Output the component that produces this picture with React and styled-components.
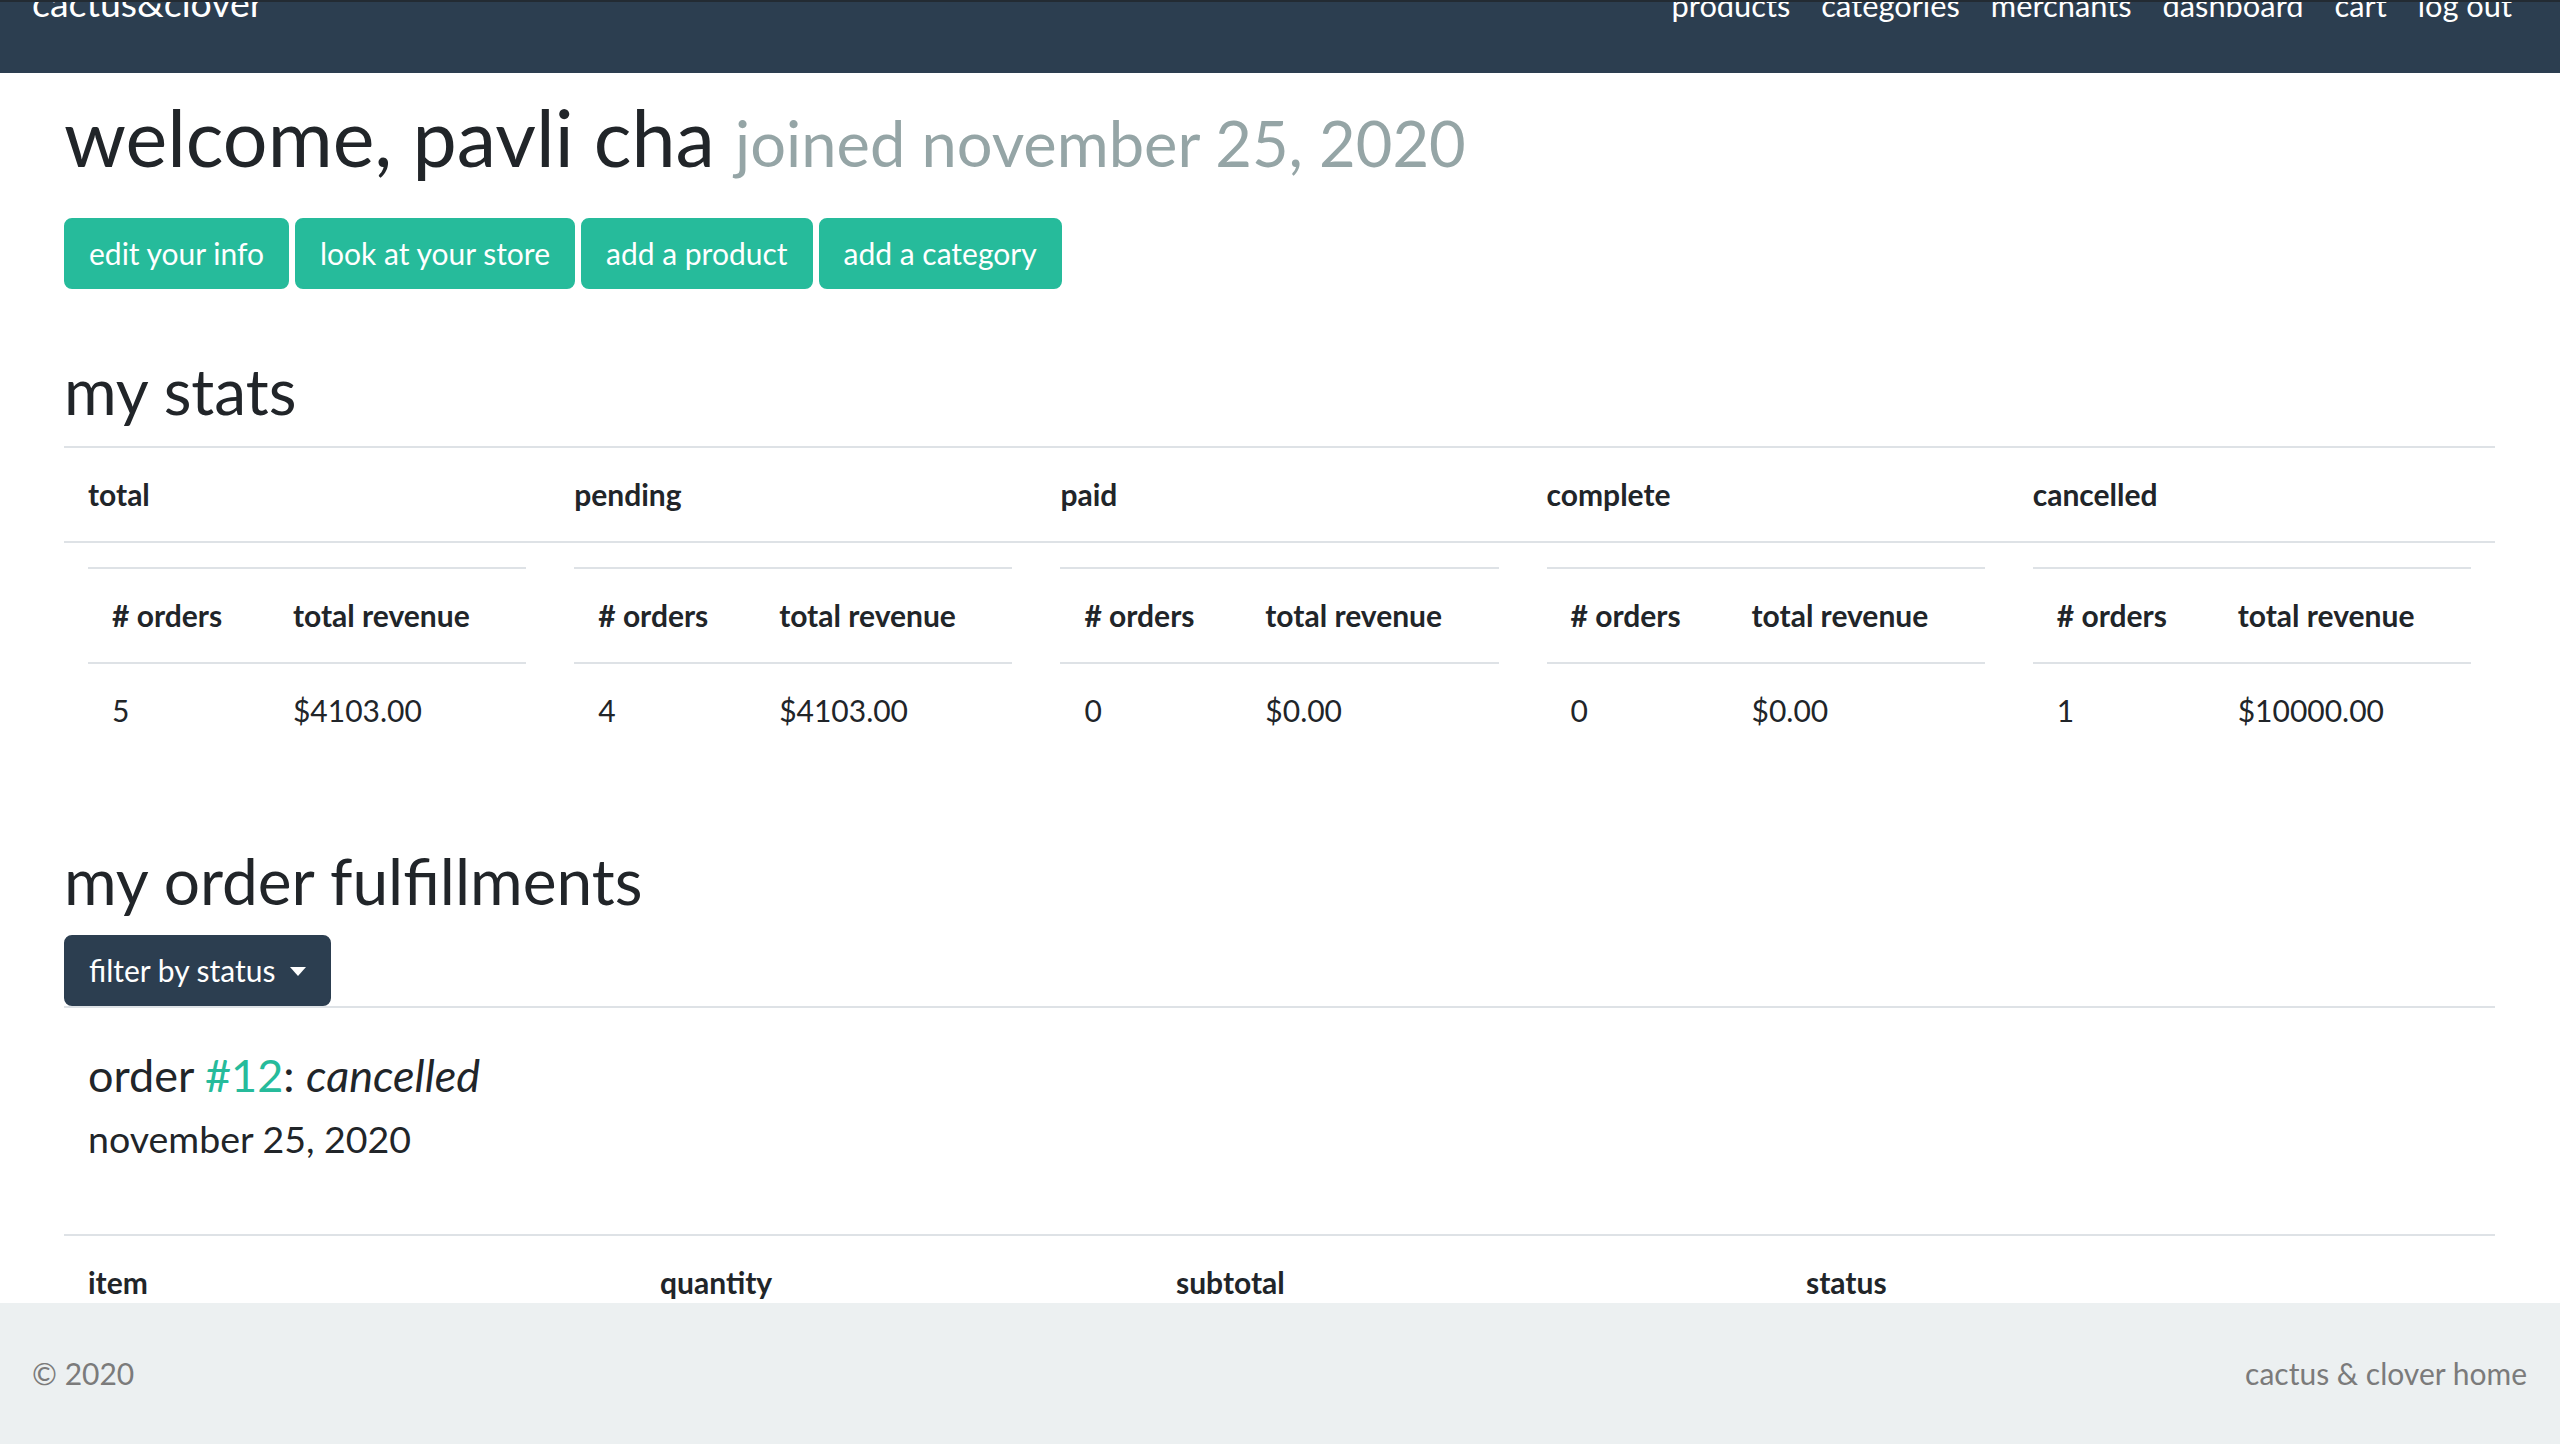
import React from "react";
import styled, { createGlobalStyle } from "styled-components";

const GlobalStyle = createGlobalStyle`
  html, body {
    margin: 0;
    padding: 0;
    background: #ffffff;
  }
  body {
    font-family: Lato, "Noto Sans", sans-serif;
    font-size: 30px;
    line-height: 1.5;
    color: #212529;
  }
  * {
    box-sizing: border-box;
  }
`;

const Navbar = styled.nav`
  height: 73px;
  overflow: hidden;
  background-color: #2c3e50;
  border-top: 2px solid #232b33;
  padding: 0 32px;
`;

const NavRow = styled.div`
  display: flex;
  align-items: baseline;
  justify-content: space-between;
  margin-top: -27px;
`;

const Brand = styled.a`
  color: #ffffff;
  font-size: 37.5px;
  line-height: 1.5;
  text-decoration: none;
`;

const NavLinks = styled.ul`
  display: flex;
  align-items: baseline;
  list-style: none;
  margin: 0;
  padding: 0;
`;

const NavLink = styled.li`
  color: #ffffff;
  font-size: 30.8px;
  line-height: 1.5;
  padding: 0 15.5px;
  &:last-child {
    padding-right: 16px;
  }
`;

const Main = styled.main`
  padding: 0 65px 160px 64px;
`;

const Title = styled.h1`
  font-size: 79px;
  font-weight: 400;
  line-height: 1.2;
  margin: 17px 0 33px;
`;

const Joined = styled.small`
  font-size: 80%;
  color: #95a5a6;
`;

const ButtonRow = styled.div`
  display: flex;
  gap: 6px;
  margin-bottom: 64px;
`;

const Button = styled.button`
  font-family: inherit;
  font-size: 30px;
  line-height: 1.5;
  color: #ffffff;
  background-color: ${(p) => (p.$variant === "primary" ? "#2c3e50" : "#26bb9b")};
  border: 2px solid ${(p) => (p.$variant === "primary" ? "#2c3e50" : "#26bb9b")};
  border-radius: 8px;
  padding: 11px 23px;
  display: inline-flex;
  align-items: center;
  cursor: pointer;
`;

const Caret = styled.span`
  display: inline-block;
  margin-left: 14px;
  width: 0;
  height: 0;
  border-top: 9px solid #ffffff;
  border-left: 8px solid transparent;
  border-right: 8px solid transparent;
  transform: translateY(1px);
`;

const SectionTitle = styled.h2`
  font-size: 64px;
  font-weight: 400;
  line-height: 1.2;
  margin: 0 0 ${(p) => p.$gap || 16}px;
`;

const Table = styled.table`
  width: 100%;
  border-collapse: collapse;
  table-layout: ${(p) => (p.$fixed ? "fixed" : "auto")};
  margin-bottom: ${(p) => p.$space || 0}px;
`;

const Th = styled.th`
  text-align: left;
  font-weight: 700;
  padding: 24px;
  vertical-align: top;
  border-top: 2px solid #dee2e6;
  border-bottom: 2px solid #dee2e6;
`;

const Td = styled.td`
  padding: 24px;
  vertical-align: top;
`;

const OrderList = styled.section`
  border-top: 2px solid #dee2e6;
  padding-top: 40px;
`;

const OrderHeading = styled.h4`
  font-size: 45px;
  font-weight: 400;
  line-height: 1.2;
  margin: 0 0 14px;
  padding-left: 24px;
`;

const OrderLink = styled.a`
  color: #26bb9b;
  text-decoration: none;
`;

const OrderDate = styled.h5`
  font-size: 37.5px;
  font-weight: 400;
  line-height: 1.2;
  margin: 0 0 73px;
  padding-left: 24px;
`;

const Footer = styled.footer`
  position: fixed;
  left: 0;
  right: 0;
  bottom: 0;
  height: 141px;
  background-color: #ecf0f1;
  color: #7b7b7b;
  display: flex;
  align-items: center;
  justify-content: space-between;
  padding: 0 33px 0 32px;
`;

const links = ["products", "categories", "merchants", "dashboard", "cart", "log out"];

const stats = [
  { label: "total", orders: 5, revenue: "$4103.00" },
  { label: "pending", orders: 4, revenue: "$4103.00" },
  { label: "paid", orders: 0, revenue: "$0.00" },
  { label: "complete", orders: 0, revenue: "$0.00" },
  { label: "cancelled", orders: 1, revenue: "$10000.00" },
];

const itemCols = [
  { label: "item", width: 572 },
  { label: "quantity", width: 516 },
  { label: "subtotal", width: 630 },
  { label: "status", width: 713 },
];

const StatCell = ({ orders, revenue }) => (
  <Table $space={32}>
    <thead>
      <tr>
        <Th># orders</Th>
        <Th>total revenue</Th>
      </tr>
    </thead>
    <tbody>
      <tr>
        <Td>{orders}</Td>
        <Td>{revenue}</Td>
      </tr>
    </tbody>
  </Table>
);

const App = () => {
  return (
    <>
      <GlobalStyle />
      <Navbar>
        <NavRow>
          <Brand>cactus&amp;clover</Brand>
          <NavLinks>
            {links.map((l) => (
              <NavLink key={l}>{l}</NavLink>
            ))}
          </NavLinks>
        </NavRow>
      </Navbar>
      <Main>
        <Title>
          welcome, pavli cha <Joined>joined november 25, 2020</Joined>
        </Title>
        <ButtonRow>
          <Button>edit your info</Button>
          <Button>look at your store</Button>
          <Button>add a product</Button>
          <Button>add a category</Button>
        </ButtonRow>

        <SectionTitle>my stats</SectionTitle>
        <Table $fixed $space={30}>
          <thead>
            <tr>
              {stats.map((s) => (
                <Th key={s.label}>{s.label}</Th>
              ))}
            </tr>
          </thead>
          <tbody>
            <tr>
              {stats.map((s) => (
                <Td key={s.label}>
                  <StatCell orders={s.orders} revenue={s.revenue} />
                </Td>
              ))}
            </tr>
          </tbody>
        </Table>

        <SectionTitle $gap={16}>my order fulfillments</SectionTitle>
        <Button $variant="primary">
          filter by status
          <Caret />
        </Button>
        <OrderList>
          <OrderHeading>
            order <OrderLink>#12</OrderLink>: <em>cancelled</em>
          </OrderHeading>
          <OrderDate>november 25, 2020</OrderDate>
          <Table $fixed>
            <colgroup>
              {itemCols.map((c) => (
                <col key={c.label} style={{ width: c.width }} />
              ))}
            </colgroup>
            <thead>
              <tr>
                {itemCols.map((c) => (
                  <Th key={c.label}>{c.label}</Th>
                ))}
              </tr>
            </thead>
          </Table>
        </OrderList>
      </Main>
      <Footer>
        <span>© 2020</span>
        <span>cactus &amp; clover home</span>
      </Footer>
    </>
  );
};

export default App;
